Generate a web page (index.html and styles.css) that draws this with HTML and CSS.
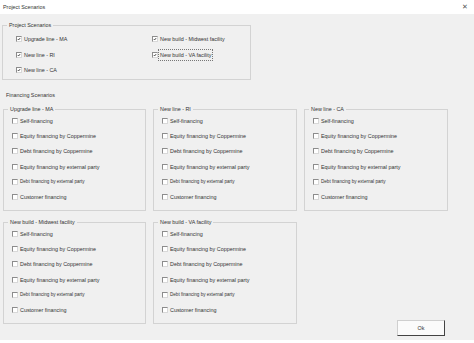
FILE: index.html
```html
<!DOCTYPE html>
<html lang="en">
<head>
    <meta charset="UTF-8">
    <title>Project Scenarios</title>
    <link rel="stylesheet" href="styles.css">
</head>
<body>
    <div class="window">
        <div class="titlebar">
            <span class="title">Project Scenarios</span>
            <span class="close">&#x2715;</span>
        </div>

        <div class="dialog">
            <fieldset class="group project">
                <legend>Project Scenarios</legend>
                <div class="project-grid">
                    <div class="col">
                        <label class="opt checked"><span class="box"><svg viewBox="0 0 10 10"><polyline points="2,5 4,7.5 8,2.5"/></svg></span>Upgrade line - MA</label>
                        <label class="opt checked"><span class="box"><svg viewBox="0 0 10 10"><polyline points="2,5 4,7.5 8,2.5"/></svg></span>New line - RI</label>
                        <label class="opt checked"><span class="box"><svg viewBox="0 0 10 10"><polyline points="2,5 4,7.5 8,2.5"/></svg></span>New line - CA</label>
                    </div>
                    <div class="col">
                        <label class="opt checked"><span class="box"><svg viewBox="0 0 10 10"><polyline points="2,5 4,7.5 8,2.5"/></svg></span>New build - Midwest facility</label>
                        <label class="opt checked"><span class="box"><svg viewBox="0 0 10 10"><polyline points="2,5 4,7.5 8,2.5"/></svg></span><span class="focus">New build - VA facility</span></label>
                    </div>
                </div>
            </fieldset>

            <div class="section-label">Financing Scenarios</div>

            <div class="financing-grid">
                <fieldset class="group fin">
                    <legend>Upgrade line - MA</legend>
                    <label class="opt"><span class="box"></span>Self-financing</label>
                    <label class="opt"><span class="box"></span>Equity financing by Coppermine</label>
                    <label class="opt"><span class="box"></span>Debt financing by Coppermine</label>
                    <label class="opt"><span class="box"></span>Equity financing by external party</label>
                    <label class="opt small"><span class="box"></span>Debt financing by external party</label>
                    <label class="opt"><span class="box"></span>Customer financing</label>
                </fieldset>
                <fieldset class="group fin">
                    <legend>New line - RI</legend>
                    <label class="opt"><span class="box"></span>Self-financing</label>
                    <label class="opt"><span class="box"></span>Equity financing by Coppermine</label>
                    <label class="opt"><span class="box"></span>Debt financing by Coppermine</label>
                    <label class="opt"><span class="box"></span>Equity financing by external party</label>
                    <label class="opt small"><span class="box"></span>Debt financing by external party</label>
                    <label class="opt"><span class="box"></span>Customer financing</label>
                </fieldset>
                <fieldset class="group fin">
                    <legend>New line - CA</legend>
                    <label class="opt"><span class="box"></span>Self-financing</label>
                    <label class="opt"><span class="box"></span>Equity financing by Coppermine</label>
                    <label class="opt"><span class="box"></span>Debt financing by Coppermine</label>
                    <label class="opt"><span class="box"></span>Equity financing by external party</label>
                    <label class="opt small"><span class="box"></span>Debt financing by external party</label>
                    <label class="opt"><span class="box"></span>Customer financing</label>
                </fieldset>
                <fieldset class="group fin">
                    <legend>New build - Midwest facility</legend>
                    <label class="opt"><span class="box"></span>Self-financing</label>
                    <label class="opt"><span class="box"></span>Equity financing by Coppermine</label>
                    <label class="opt"><span class="box"></span>Debt financing by Coppermine</label>
                    <label class="opt"><span class="box"></span>Equity financing by external party</label>
                    <label class="opt small"><span class="box"></span>Debt financing by external party</label>
                    <label class="opt"><span class="box"></span>Customer financing</label>
                </fieldset>
                <fieldset class="group fin">
                    <legend>New build - VA facility</legend>
                    <label class="opt"><span class="box"></span>Self-financing</label>
                    <label class="opt"><span class="box"></span>Equity financing by Coppermine</label>
                    <label class="opt"><span class="box"></span>Debt financing by Coppermine</label>
                    <label class="opt"><span class="box"></span>Equity financing by external party</label>
                    <label class="opt small"><span class="box"></span>Debt financing by external party</label>
                    <label class="opt"><span class="box"></span>Customer financing</label>
                </fieldset>
                <div class="actions">
                    <button class="ok-btn">Ok</button>
                </div>
            </div>
        </div>
    </div>
</body>
</html>
```

FILE: styles.css
```css
body {
    margin: 0;
    background: white;
    font-family: "Liberation Sans", Arial, sans-serif;
    font-size: 5.4px;
    color: #333;
}
.window {
    width: 474px;
    height: 343px;
}
.titlebar {
    height: 14px;
    display: flex;
    align-items: center;
    justify-content: space-between;
    padding: 0 6px 0 3px;
    background: white;
}
.close {
    font-size: 7px;
    color: #555;
}
.dialog {
    height: 326px;
    box-sizing: border-box;
    background: #f0f0f0;
    padding: 7px 0 0 2px;
}
.group {
    margin: 0;
    padding: 0;
    border: 1px solid #d3d3d3;
    min-width: 0;
}
.group legend {
    margin-left: 4px;
    padding: 0 2px;
    line-height: 8px;
}
.project {
    width: 249px;
    box-sizing: border-box;
    padding: 6px 0 5px 0;
}
.project-grid {
    display: grid;
    grid-template-columns: 136px 1fr;
    padding-left: 13px;
}
.project-grid .col {
    display: flex;
    flex-direction: column;
    gap: 7.5px;
}
.opt {
    display: flex;
    align-items: center;
    height: 8px;
    line-height: 8px;
    white-space: nowrap;
}
.opt.small {
    font-size: 4.6px;
}
.box {
    width: 4px;
    height: 4px;
    margin-right: 2px;
    border: 1px solid #8c8c8c;
    border-right-color: #d8d8d8;
    border-bottom-color: #d8d8d8;
    background: white;
    flex: none;
    display: flex;
}
.box svg {
    width: 4px;
    height: 4px;
    fill: none;
    stroke: #333;
    stroke-width: 2;
}
.focus {
    outline: 1px dotted #777;
    outline-offset: 1px;
}
.section-label {
    margin: 11px 0 6px 4px;
    line-height: 8px;
}
.financing-grid {
    display: grid;
    grid-template-columns: 143px 144px 144px;
    grid-auto-rows: 106px;
    column-gap: 7px;
    row-gap: 7px;
    margin-left: 1px;
}
.fin {
    display: flex;
    flex-direction: column;
    gap: 7.2px;
    padding: 4px 0 0 0;
}
.fin .opt {
    margin-left: 8px;
}
.actions {
    display: flex;
    justify-content: flex-end;
    align-items: flex-end;
    margin-bottom: -12px;
    padding-right: 3px;
}
.ok-btn {
    width: 48px;
    height: 16px;
    padding: 0;
    font-family: inherit;
    font-size: 5.4px;
    color: #333;
    background: #fbfbfb;
    border: 1px solid #cfcfcf;
    border-right-color: #444;
    border-bottom-color: #444;
}
```
